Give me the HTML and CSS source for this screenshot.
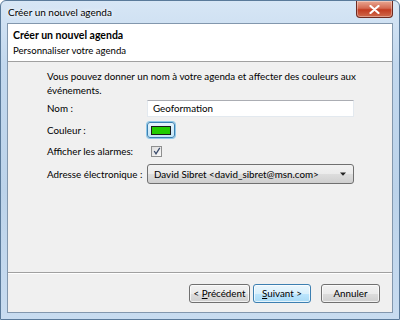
FILE: index.html
```html
<!DOCTYPE html>
<html lang="fr">
<head>
<meta charset="utf-8">
<link rel="stylesheet" href="styles.css">
</head>
<body>
<div class="window">
  <div class="titlebar">
    <span class="title">Créer un nouvel agenda</span>
    <div class="close"><svg width="11" height="9" viewBox="0 0 11 9"><path d="M1.5 1 L9.5 8 M9.5 1 L1.5 8" stroke="#fff" stroke-width="2.2" stroke-linecap="round"/></svg></div>
  </div>
  <div class="client">
    <div class="header">
      <div class="h-title">Créer un nouvel agenda</div>
      <div class="h-sub">Personnaliser votre agenda</div>
    </div>
    <div class="body">
      <p class="intro">Vous pouvez donner un nom à votre agenda et affecter des couleurs aux événements.</p>
      <div class="form">
        <label class="lbl">Nom :</label>
        <div class="input">Geoformation</div>
        <label class="lbl">Couleur :</label>
        <div class="colorbtn"><span class="swatch"></span></div>
        <label class="lbl">Afficher les alarmes:</label>
        <div class="checkcell"><span class="check"><svg width="8" height="8" viewBox="0 0 8 8"><path d="M1.2 4 L3 6.8 L6.8 0.8" fill="none" stroke="#3a4a6a" stroke-width="1.3"/></svg></span></div>
        <label class="lbl">Adresse électronique :</label>
        <div class="select"><span>David Sibret &lt;david_sibret@msn.com&gt;</span><svg width="6" height="4" viewBox="0 0 6 4"><path d="M0 0.5 H6 L3 3.8 Z" fill="#222"/></svg></div>
      </div>
    </div>
    <div class="footer">
      <button class="btn prev"><span>&lt; <u>P</u>récédent</span></button>
      <button class="btn primary"><span><u>S</u>uivant &gt;</span></button>
      <button class="btn cancel"><span>Annuler</span></button>
    </div>
  </div>
</div>
</body>
</html>
```
FILE: styles.css
```css
* { box-sizing: border-box; }
html, body { margin: 0; padding: 0; }
body {
  width: 400px; height: 320px; overflow: hidden;
  font-family: Lato, "Noto Sans", sans-serif;
  font-size: 9.8px;
  color: #000;
  background: #fff;
}
.window {
  width: 400px; height: 320px;
  display: flex; flex-direction: column;
  padding: 0 6px 6px 6px;
  border: 1px solid #5a7a9a;
  border-radius: 6px 6px 0 0;
  background: linear-gradient(180deg, #d7e6f5 0%, #c2d8ee 20%, #bcd3ea 60%, #c8dcf0 100%);
}
.titlebar {
  height: 22px;
  display: flex; align-items: flex-start;
}
.title {
  margin-top: 5px;
  margin-left: 1px;
  font-size: 10px;
  color: #000;
  white-space: nowrap;
  text-shadow: 0 0 6px #fff, 0 0 3px #fff;
}
.close {
  margin-left: auto;
  width: 37px; height: 17px;
  border: 1px solid #6e2a20;
  border-top: none;
  border-radius: 0 0 4px 4px;
  background: linear-gradient(180deg, #e9a792 0%, #d46a52 45%, #c23b20 55%, #cf6a4c 100%);
  display: flex; align-items: center; justify-content: center;
  box-shadow: inset 0 0 0 1px rgba(255,255,255,0.35);
}
.client {
  flex: 1;
  display: flex; flex-direction: column;
  border: 1px solid #8297ad;
  background: #f0f0f0;
}
.header {
  height: 38px;
  background: #fff;
  border-bottom: 1px solid #a0a0a0;
  padding: 4px 0 0 5px;
  line-height: 15px;
  white-space: nowrap;
}
.h-title { font-weight: bold; font-size: 10.5px; }
.h-sub { font-size: 9.6px; }
.body {
  flex: 1;
  padding: 7px 0 0 39px;
}
.intro {
  margin: 0 0 3px 0;
  width: 316px;
  line-height: 14px;
}
.form {
  display: grid;
  grid-template-columns: 100px 207px;
  row-gap: 5px;
  align-items: center;
  white-space: nowrap;
}
.lbl { line-height: 15px; }
.input {
  height: 17px;
  background: #fff;
  border: 1px solid #e3e9ef;
  border-top-color: #abadb3;
  padding: 0 5px;
  line-height: 15px;
}
.colorbtn {
  width: 28px; height: 16px;
  border: 1px solid #3c7fb1;
  border-radius: 3px;
  background: linear-gradient(180deg, #e5f4fc, #c4e5f6);
  display: flex; align-items: center; justify-content: center;
  box-shadow: 0 0 0 1px #8fc8e8;
}
.swatch {
  width: 20px; height: 9px;
  background: #22cc00;
  border: 1px solid #1a1a1a;
}
.checkcell { padding-left: 4px; height: 16px; display: flex; align-items: center; }
.check {
  width: 11px; height: 11px;
  border: 1px solid #8e8f8f;
  background: linear-gradient(135deg, #dcdcdc, #fafafa);
  display: flex; align-items: center; justify-content: center;
}
.select {
  height: 20px;
  border: 1px solid #707070;
  border-radius: 3px;
  background: linear-gradient(180deg, #f2f2f2 0%, #ebebeb 50%, #dddddd 51%, #cfcfcf 100%);
  display: flex; align-items: center; justify-content: space-between;
  padding: 0 7px 0 6px;
}
.footer {
  height: 40px;
  border-top: 1px solid #a0a0a0;
  box-shadow: inset 0 1px 0 #fff;
  display: flex; align-items: flex-start; justify-content: flex-end;
  padding: 11px 12px 0 0;
  gap: 3px;
}
.btn {
  font: inherit;
  height: 19px;
  width: 59px;
  padding: 0;
  white-space: nowrap;
  border: 1px solid #707070;
  border-radius: 3px;
  background: linear-gradient(180deg, #f2f2f2 0%, #ebebeb 50%, #dddddd 51%, #cfcfcf 100%);
  box-shadow: inset 0 0 0 1px rgba(255,255,255,0.7);
  color: #000;
  line-height: 15px;
}
.btn.prev { width: 61px; }
.btn.primary {
  width: 58px;
  border-color: #3c7fb1;
  background: linear-gradient(180deg, #eaf6fd 0%, #d9f0fc 50%, #bee6fd 51%, #a7d9f5 100%);
}
.btn.cancel { margin-left: 7px; }
```
